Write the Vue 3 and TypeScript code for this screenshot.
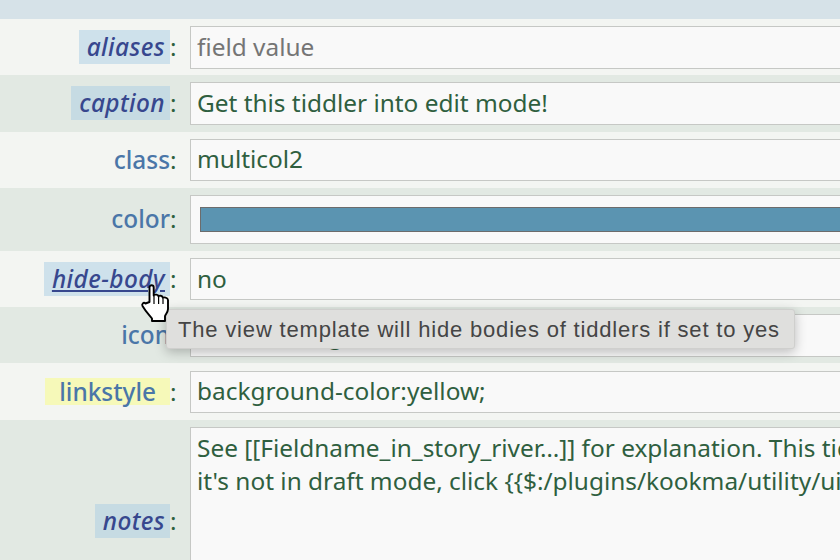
<script setup lang="ts">
interface Field {
  name: string
  value?: string
  kind?: 'swatch' | 'area'
  mark?: 'tag' | 'link' | 'yellow'
}

const fields: Field[] = [
  { name: 'aliases', mark: 'tag' },
  { name: 'caption', value: 'Get this tiddler into edit mode!', mark: 'tag' },
  { name: 'class', value: 'multicol2' },
  { name: 'color', kind: 'swatch' },
  { name: 'hide-body', value: 'no', mark: 'link' },
  { name: 'icon', value: '$:/core/images/edit-button' },
  { name: 'linkstyle', value: 'background-color:yellow;', mark: 'yellow' },
  { name: 'notes', kind: 'area', mark: 'tag' }
]

const notes =
  "See [[Fieldname_in_story_river…]] for explanation. This tiddler\nit's not in draft mode, click {{$:/plugins/kookma/utility/ui/buttons}}"
</script>

<template>
  <div class="page">
    <div class="topbar"></div>
    <div
      v-for="f in fields"
      :key="f.name"
      class="row"
      :class="{ 'row-area': f.kind === 'area', 'row-swatch': f.kind === 'swatch' }"
    >
      <div class="label">
        <span class="name" :class="f.mark ? 'mark-' + f.mark : ''">{{ f.name }}</span><span class="colon">:</span>
      </div>
      <div v-if="f.kind === 'swatch'" class="box swatch-box"><div class="swatch"></div></div>
      <textarea v-else-if="f.kind === 'area'" class="box area" wrap="off" :value="notes"></textarea>
      <input v-else class="box" type="text" :value="f.value ?? ''" placeholder="field value" />
    </div>

    <div class="tooltip">The view template will hide bodies of tiddlers if set to yes</div>

    <svg class="cursor" width="30" height="42" viewBox="0 0 30 42">
      <path
        d="M9.5 20V5.5C9.5 4 10.5 3.3 11.5 3.3S13.7 4 13.7 5.5V13.5C14.2 12.2 18.2 12.2 18.6 14.5C19 13.2 22.6 13.4 22.9 15.8C23.6 15 27.8 15.2 28 18V27C28 30 25.8 32 25 34V39H12V36.5C9.5 33 6 30 2.5 24C1.5 22 3.5 19.8 5.5 21.5Z"
        fill="#fff"
        stroke="#000"
        stroke-width="1.9"
        stroke-linejoin="round"
      />
      <path d="M14 14V22M18.6 15V22M23 16.5V22" fill="none" stroke="#000" stroke-width="1.2" />
    </svg>
  </div>
</template>

<style>
html, body { margin: 0; overflow: hidden; background: #e2e9e3; }
</style>

<style scoped>
.page {
  position: relative;
  width: 840px;
  height: 560px;
  overflow: hidden;
  font-family: "Noto Sans", sans-serif;
  font-size: 24.4px;
  color: #2f5f3f;
}
.topbar { height: 19px; background: #d6e2e8; }
.row {
  display: flex;
  align-items: center;
  height: 56.3px;
  background: #f3f5f2;
}
.row:nth-child(odd) { background: #e2e9e3; }
.row-swatch { height: 63px; }
.row-area { height: 160px; }
.label {
  flex: 0 0 190px;
  box-sizing: border-box;
  padding-right: 14px;
  text-align: right;
  white-space: nowrap;
}
.row-area .label { align-self: flex-start; margin-top: 84px; }
.name {
  display: inline-block;
  color: #4a76a8;
  font-weight: 500;
  line-height: 34px;
}
.colon { display: inline-block; width: 6px; text-align: left; }
.mark-tag,
.mark-link {
  color: #37478e;
  font-style: italic;
  letter-spacing: 0.4px;
  padding: 0 5px 0 8px;
  background: rgba(170, 205, 228, 0.5);
}
.mark-link { text-decoration: underline; }
.mark-yellow { background: #f6f9b9; padding: 0 14px; line-height: 27px; }
.box {
  display: block;
  flex: none;
  align-self: flex-start;
  box-sizing: border-box;
  width: 900px;
  height: 42.5px;
  margin: 7.1px 0 0;
  padding: 0 6px 2px;
  background: #f9f9f9;
  border: 1.5px solid #c6c8c5;
  border-radius: 0;
  outline: none;
  font: inherit;
  color: inherit;
}
.box::placeholder { color: #757575; opacity: 1; }
.swatch-box { height: 49px; padding: 11px 9px; }
.swatch { height: 25px; box-sizing: border-box; background: #5b94b1; border: 1.5px solid #6c6c6c; }
.area { height: 200px; padding: 3px 6px; line-height: 33px; resize: none; overflow: hidden; }
.tooltip {
  position: absolute;
  left: 166px;
  top: 309px;
  box-sizing: border-box;
  width: 629px;
  height: 40px;
  padding-left: 11px;
  line-height: 39px;
  font-family: "Liberation Sans", sans-serif;
  font-size: 22px;
  letter-spacing: 0.82px;
  color: #454545;
  background: #dfdfdd;
  border: 1px solid #cfcfcd;
  border-radius: 3px;
  box-shadow: 0 3px 12px rgba(0, 0, 0, 0.25);
  white-space: nowrap;
}
.cursor { position: absolute; left: 140px; top: 282px; }
</style>
